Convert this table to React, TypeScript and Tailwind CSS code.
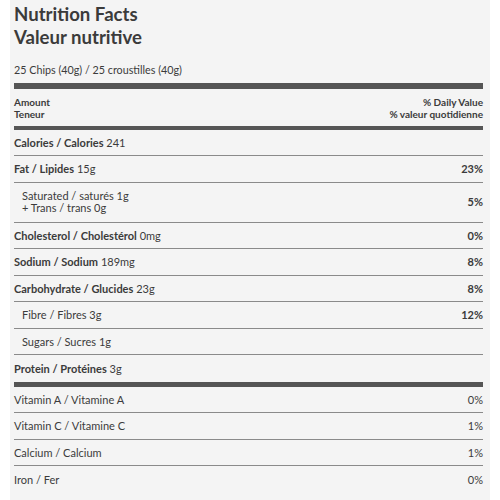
type Row = {
  label: string;
  amount?: string;
  dv?: string;
  bold?: boolean;
  indent?: boolean;
  second?: string;
  tall?: boolean;
};

const MAIN: Row[] = [
  { label: "Calories / Calories", amount: "241", bold: true },
  { label: "Fat / Lipides", amount: "15g", dv: "23%", bold: true },
  { label: "Saturated / saturés 1g", second: "+ Trans / trans 0g", dv: "5%", indent: true, tall: true },
  { label: "Cholesterol / Cholestérol", amount: "0mg", dv: "0%", bold: true },
  { label: "Sodium / Sodium", amount: "189mg", dv: "8%", bold: true },
  { label: "Carbohydrate / Glucides", amount: "23g", dv: "8%", bold: true },
  { label: "Fibre / Fibres 3g", dv: "12%", indent: true },
  { label: "Sugars / Sucres 1g", indent: true },
  { label: "Protein / Protéines", amount: "3g", bold: true },
];

const VITAMINS = [
  { label: "Vitamin A / Vitamine A", dv: "0%" },
  { label: "Vitamin C / Vitamine C", dv: "1%" },
  { label: "Calcium / Calcium", dv: "1%" },
  { label: "Iron / Fer", dv: "0%" },
];

export default function App() {
  return (
    <div className="w-[500px] h-[500px] bg-white font-['Lato','Liberation_Sans',sans-serif] text-[#3b3b3b]">
      <div className="mx-[10px] h-full bg-[#f4f4f4] pl-[4px] pr-[7px]">
        {/* Title */}
        <h1 className="pt-[3px] text-[18.6px] leading-[22.5px] font-bold">
          Nutrition Facts
          <br />
          Valeur nutritive
        </h1>
        <p className="mt-[14.7px] text-[10.75px] leading-[14px]">25 Chips (40g) / 25 croustilles (40g)</p>
        <div className="mt-[6.3px] h-[6px] bg-[#555]" />

        {/* Column heads */}
        <div className="mt-[6.6px] flex justify-between text-[10px] leading-[12.3px] font-bold">
          <div>
            Amount
            <br />
            Teneur
          </div>
          <div className="text-right">
            % Daily Value
            <br />
            % valeur quotidienne
          </div>
        </div>
        <div className="mt-[5.8px] h-[4px] bg-[#555]" />

        {/* Nutrients */}
        {MAIN.map((r, i) => (
          <div
            key={i}
            className={
              "flex items-center justify-between text-[11px] " +
              (r.tall ? "h-[40px] leading-[12.5px] " : "h-[26.5px] leading-[16px] ") +
              (i < MAIN.length - 1 ? "border-b border-[#8a8a8a]" : "")
            }
          >
            <div className={r.indent ? "pl-[8px]" : ""}>
              {r.bold ? <span className="font-bold">{r.label}</span> : r.label}
              {r.amount && <span> {r.amount}</span>}
              {r.second && (
                <>
                  <br />
                  {r.second}
                </>
              )}
            </div>
            {r.dv && <div className="font-bold">{r.dv}</div>}
          </div>
        ))}
        <div className="h-[5px] bg-[#555]" />

        {/* Vitamins */}
        {VITAMINS.map((v, i) => (
          <div
            key={i}
            className={
              "flex h-[26.5px] items-center justify-between text-[11px] leading-[16px] " +
              (i < VITAMINS.length - 1 ? "border-b border-[#8a8a8a]" : "")
            }
          >
            <div>{v.label}</div>
            <div>{v.dv}</div>
          </div>
        ))}
      </div>
    </div>
  );
}
